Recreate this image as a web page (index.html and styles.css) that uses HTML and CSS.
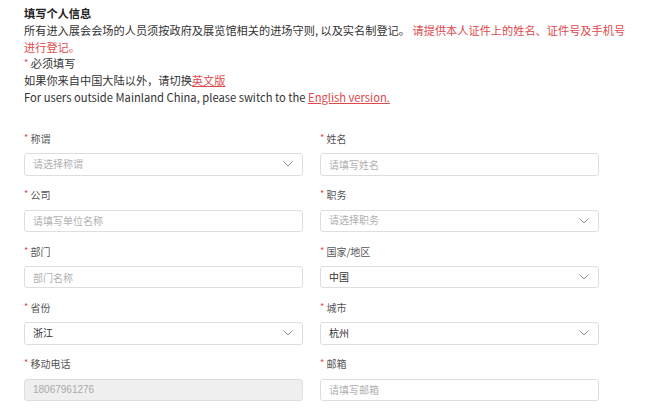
FILE: index.html
```html
<!DOCTYPE html>
<html lang="zh-CN">
<head>
    <meta charset="UTF-8">
    <meta name="viewport" content="width=device-width, initial-scale=1.0">
    <title>填写个人信息</title>
    <link rel="stylesheet" href="styles.css">
</head>
<body>
    <div class="intro">
        <h2 class="titulo">填写个人信息</h2>
        <p>所有进入展会会场的人员须按政府及展览馆相关的进场守则, 以及实名制登记。 <span class="rojo">请提供本人证件上的姓名、证件号及手机号进行登记。</span></p>
        <p><span class="asterisco">*</span> 必须填写</p>
        <p>如果你来自中国大陆以外，请切换<a href="#">英文版</a></p>
        <p>For users outside Mainland China, please switch to the <a href="#">English version.</a></p>
    </div>
    <form class="formulario">
        <div class="campo">
            <label><span class="asterisco">*</span> 称谓</label>
            <div class="caja select vacio">请选择称谓 <svg viewBox="0 0 10 6"><polyline points="0.5,0.5 5,5 9.5,0.5"/></svg></div>
        </div>
        <div class="campo">
            <label><span class="asterisco">*</span> 姓名</label>
            <input class="caja" type="text" placeholder="请填写姓名">
        </div>
        <div class="campo">
            <label><span class="asterisco">*</span> 公司</label>
            <input class="caja" type="text" placeholder="请填写单位名称">
        </div>
        <div class="campo">
            <label><span class="asterisco">*</span> 职务</label>
            <div class="caja select vacio">请选择职务 <svg viewBox="0 0 10 6"><polyline points="0.5,0.5 5,5 9.5,0.5"/></svg></div>
        </div>
        <div class="campo">
            <label><span class="asterisco">*</span> 部门</label>
            <input class="caja" type="text" placeholder="部门名称">
        </div>
        <div class="campo">
            <label><span class="asterisco">*</span> 国家/地区</label>
            <div class="caja select">中国 <svg viewBox="0 0 10 6"><polyline points="0.5,0.5 5,5 9.5,0.5"/></svg></div>
        </div>
        <div class="campo">
            <label><span class="asterisco">*</span> 省份</label>
            <div class="caja select">浙江 <svg viewBox="0 0 10 6"><polyline points="0.5,0.5 5,5 9.5,0.5"/></svg></div>
        </div>
        <div class="campo">
            <label><span class="asterisco">*</span> 城市</label>
            <div class="caja select">杭州 <svg viewBox="0 0 10 6"><polyline points="0.5,0.5 5,5 9.5,0.5"/></svg></div>
        </div>
        <div class="campo">
            <label><span class="asterisco">*</span> 移动电话</label>
            <input class="caja" type="text" value="18067961276" disabled>
        </div>
        <div class="campo">
            <label><span class="asterisco">*</span> 邮箱</label>
            <input class="caja" type="text" placeholder="请填写邮箱">
        </div>
    </form>
</body>
</html>
```

FILE: styles.css
```css
body {
    margin: 0;
    padding: 5px 16px 0 24px;
    background: #fff;
    color: #333;
    font-family: "Noto Sans CJK SC", "Noto Sans", sans-serif;
    font-size: 11.2px;
    line-height: 16.8px;
}
.titulo {
    margin: 0;
    font-size: 11.2px;
    line-height: 16.8px;
    font-weight: bold;
    color: #222;
}
.intro p {
    margin: 0;
}
.rojo {
    color: #e0474c;
}
.intro a {
    color: #e0474c;
    text-decoration: underline;
}
.asterisco {
    color: #e0474c;
    font-size: 9px;
    line-height: 1;
    position: relative;
    top: -2px;
}
.formulario {
    width: 575px;
    margin-top: 25px;
    display: grid;
    grid-template-columns: 1fr 1fr;
    column-gap: 17px;
}
.campo {
    display: flex;
    flex-direction: column;
    margin-bottom: 11.6px;
}
.campo label {
    height: 16.8px;
    font-size: 10px;
    line-height: 16.8px;
    color: #555;
    margin-bottom: 5.6px;
}
.caja {
    box-sizing: border-box;
    height: 22.4px;
    width: 100%;
    margin: 0;
    padding: 0 9px 0 8px;
    border: 1px solid #dedede;
    border-radius: 3px;
    background: #fff;
    font-family: "Noto Sans CJK SC", sans-serif;
    font-size: 10px;
    color: #333;
    outline: none;
}
.caja::placeholder {
    color: #b0b0b0;
}
.caja:disabled {
    background: #efefef;
    color: #aaa;
    font-family: "Liberation Sans", "Noto Sans CJK SC", sans-serif;
}
.select {
    display: flex;
    align-items: center;
    justify-content: space-between;
}
.vacio {
    color: #b0b0b0;
}
.select svg {
    width: 10px;
    height: 6px;
    fill: none;
    stroke: #8c8c8c;
    stroke-width: 1;
}
```
